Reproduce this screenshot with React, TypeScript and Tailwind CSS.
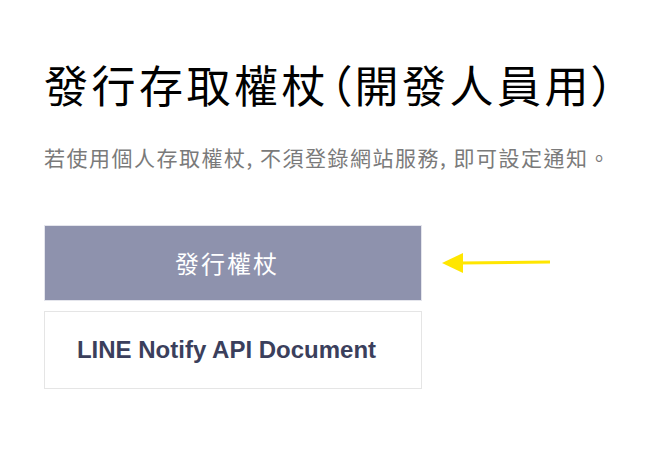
// Issue access token page (developer)
const cjk = "font-['Noto_Sans_CJK_TC','Noto_Sans_CJK_SC',sans-serif]";

export default function App() {
  return (
    <div className="min-h-screen bg-white pl-[44px] pt-[62px]">
      <h1
        className={`${cjk} text-[44px] leading-none font-normal tracking-[3.5px] text-black [font-feature-settings:'palt']`}
      >
        發行存取權杖（開發人員用）
      </h1>

      <p className={`${cjk} mt-[41px] text-[21px] leading-none tracking-[1.5px] text-[#7a7a7a]`}>
        若使用個人存取權杖, 不須登錄網站服務, 即可設定通知。
      </p>

      <div className="mt-[57px] flex items-center gap-[20px]">
        <button
          className={`${cjk} h-[76px] w-[378px] border border-[#e4e5ec] bg-[#8e92ad] pr-[12px] text-[24px] tracking-[2px] text-white`}
        >
          發行權杖
        </button>
        {/* yellow pointer arrow */}
        <svg width="110" height="24" viewBox="0 0 110 24">
          <polygon points="0,12 21,2 21,22" fill="#ffe600" />
          <line x1="18" y1="12" x2="108" y2="11" stroke="#ffe600" strokeWidth="3" />
        </svg>
      </div>

      <button className="mt-[10px] h-[78px] w-[378px] border border-[#e5e5e5] bg-white pr-[13px] font-['Liberation_Sans',Arial,sans-serif] text-[24px] font-bold text-[#3b3f5c]">
        LINE Notify API Document
      </button>
    </div>
  );
}
